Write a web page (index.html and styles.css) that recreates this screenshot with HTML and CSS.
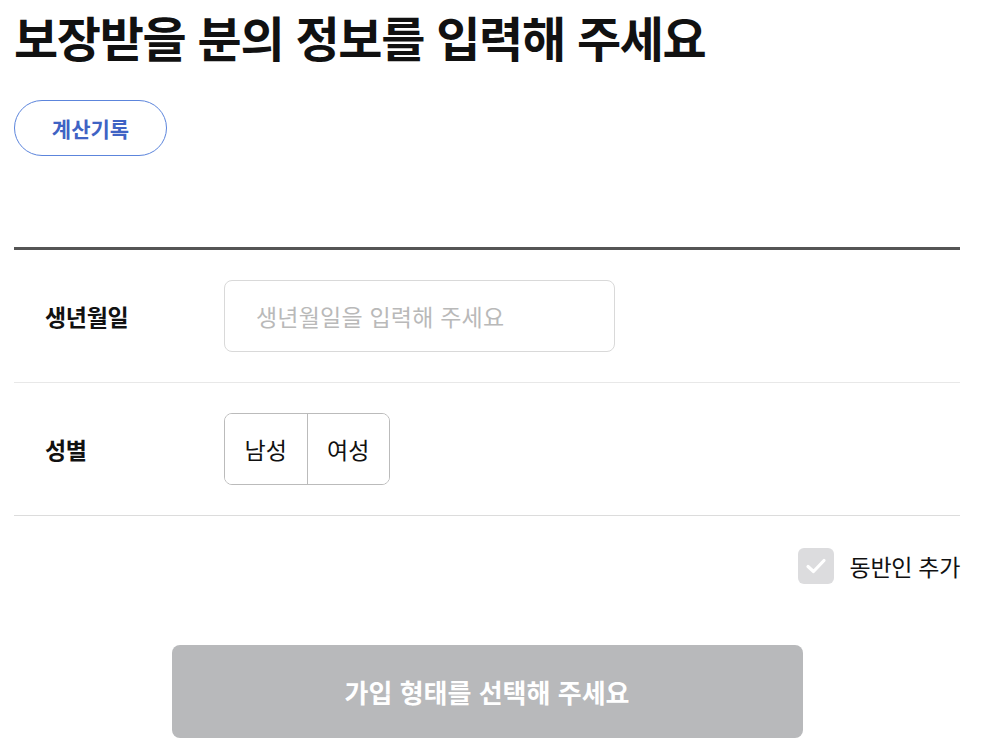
FILE: index.html
```html
<!DOCTYPE html>
<html lang="ko">
<head>
    <meta charset="UTF-8">
    <title>보장받을 분의 정보</title>
    <link rel="stylesheet" href="styles.css">
</head>
<body>
    <div class="page">
        <h1 class="title">보장받을 분의 정보를 입력해 주세요</h1>
        <button class="history-btn" type="button">계산기록</button>

        <div class="form">
            <div class="row">
                <div class="label">생년월일</div>
                <input class="text-input" type="text" placeholder="생년월일을 입력해 주세요">
            </div>
            <div class="row">
                <div class="label">성별</div>
                <div class="toggle">
                    <button type="button" class="toggle-item">남성</button>
                    <button type="button" class="toggle-item">여성</button>
                </div>
            </div>
        </div>

        <label class="companion">
            <span class="check">
                <svg width="36" height="36" viewBox="0 0 36 36"><path d="M10 18.5 L15.5 23.5 L26 12.5" fill="none" stroke="#fff" stroke-width="3.2" stroke-linecap="round" stroke-linejoin="round"/></svg>
            </span>
            <span class="companion-text">동반인 추가</span>
        </label>

        <div class="submit-wrap">
            <button class="submit" type="button">가입 형태를 선택해 주세요</button>
        </div>
    </div>
</body>
</html>
```

FILE: styles.css
```css
/* Styles généraux */
body {
    margin: 0;
    font-family: "Noto Sans CJK KR", "Noto Sans", sans-serif;
    color: #111;
    background: #fff;
}

.page {
    width: 946px;
    padding: 0 24px 0 14px;
}

.title {
    margin: 0;
    padding-top: 5px;
    font-size: 48px;
    font-weight: 700;
    letter-spacing: -1.3px;
    line-height: 62px;
    color: #111;
}

.history-btn {
    margin-top: 33px;
    width: 153px;
    height: 56px;
    border: 1px solid #5c85dc;
    border-radius: 28px;
    background: #fff;
    color: #3f63c4;
    font-family: inherit;
    font-size: 21px;
    font-weight: 700;
    padding: 0;
}

/* formulaire */
.form {
    margin-top: 91px;
    border-top: 3px solid #555;
}

.row {
    display: flex;
    align-items: center;
    height: 132px;
    border-bottom: 1px solid #e8e8e8;
}

.row:last-child {
    border-bottom-color: #dcdcdc;
}

.label {
    width: 179px;
    padding-left: 31px;
    font-size: 23px;
    font-weight: 700;
    letter-spacing: -0.3px;
}

.text-input {
    box-sizing: border-box;
    width: 391px;
    height: 72px;
    border: 1px solid #d9d9d9;
    border-radius: 8px;
    padding: 0 31px;
    font-family: inherit;
    font-size: 23px;
    letter-spacing: 0.2px;
    color: #111;
    outline: none;
}

.text-input::placeholder {
    color: #b9b9b9;
}

.toggle {
    display: flex;
    width: 166px;
    height: 72px;
    box-sizing: border-box;
    border: 1px solid #bbb;
    border-radius: 8px;
    overflow: hidden;
}

.toggle-item {
    flex: 1;
    border: none;
    background: #fff;
    font-family: inherit;
    font-size: 23px;
    color: #111;
    padding: 0;
}

.toggle-item + .toggle-item {
    border-left: 1px solid #bbb;
}

/* case à cocher */
.companion {
    display: flex;
    justify-content: flex-end;
    align-items: center;
    gap: 16px;
    margin-top: 32px;
}

.check {
    display: flex;
    width: 36px;
    height: 36px;
    border-radius: 6px;
    background: #dcdcde;
}

.companion-text {
    font-size: 23px;
    letter-spacing: -0.3px;
    color: #111;
}

/* bouton principal */
.submit-wrap {
    display: flex;
    justify-content: center;
    margin-top: 61px;
}

.submit {
    width: 631px;
    height: 93px;
    border: none;
    border-radius: 8px;
    background: #b8b9bb;
    color: #fff;
    font-family: inherit;
    font-size: 26px;
    font-weight: 700;
}
```
